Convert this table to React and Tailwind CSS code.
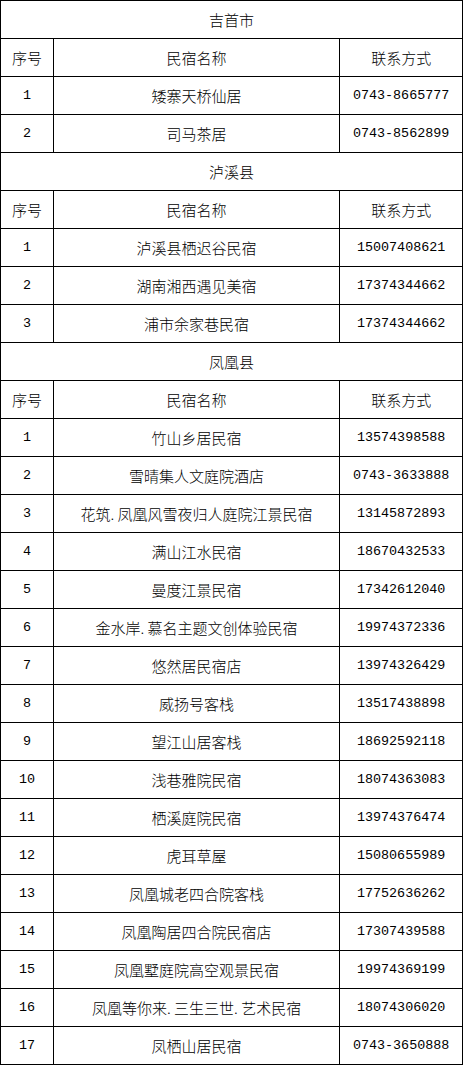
import React from 'react';

const sections = [
  {
    name: '吉首市',
    rows: [
      ['1', '矮寨天桥仙居', '0743-8665777'],
      ['2', '司马茶居', '0743-8562899'],
    ],
  },
  {
    name: '泸溪县',
    rows: [
      ['1', '泸溪县栖迟谷民宿', '15007408621'],
      ['2', '湖南湘西遇见美宿', '17374344662'],
      ['3', '浦市余家巷民宿', '17374344662'],
    ],
  },
  {
    name: '凤凰县',
    rows: [
      ['1', '竹山乡居民宿', '13574398588'],
      ['2', '雪晴集人文庭院酒店', '0743-3633888'],
      ['3', '花筑. 凤凰风雪夜归人庭院江景民宿', '13145872893'],
      ['4', '满山江水民宿', '18670432533'],
      ['5', '曼度江景民宿', '17342612040'],
      ['6', '金水岸. 慕名主题文创体验民宿', '19974372336'],
      ['7', '悠然居民宿店', '13974326429'],
      ['8', '威扬号客栈', '13517438898'],
      ['9', '望江山居客栈', '18692592118'],
      ['10', '浅巷雅院民宿', '18074363083'],
      ['11', '栖溪庭院民宿', '13974376474'],
      ['12', '虎耳草屋', '15080655989'],
      ['13', '凤凰城老四合院客栈', '17752636262'],
      ['14', '凤凰陶居四合院民宿店', '17307439588'],
      ['15', '凤凰墅庭院高空观景民宿', '19974369199'],
      ['16', '凤凰等你来. 三生三世. 艺术民宿', '18074306020'],
      ['17', '凤栖山居民宿', '0743-3650888'],
    ],
  },
];

const cjk = "font-['Noto_Sans_CJK_SC',sans-serif] text-[15px] font-light";
const mono = "font-['Liberation_Mono',monospace] text-[13.4px]";

const Cell = ({ w, last, children, font }) => (
  <div
    className={`${w} h-full flex items-center justify-center pt-[2px] ${last ? '' : 'border-r border-black'} ${font}`}
  >
    {children}
  </div>
);

const Row = ({ a, b, c, header }) => (
  <div className="flex h-[38px] border-b border-black text-black">
    <Cell w="w-[53px]" font={header ? cjk : mono}>{a}</Cell>
    <Cell w="w-[287px]" font={cjk}>{b}</Cell>
    <Cell w="w-[122px]" last font={header ? cjk : mono}>{c}</Cell>
  </div>
);

export default function App() {
  return (
    <div className="bg-white w-[464px] min-h-[1065px]">
      <div className="w-[463px] border-l border-t border-r border-black box-border">
        {sections.map((s) => (
          <div key={s.name}>
            <div className={`h-[38px] border-b border-black flex items-center justify-center pt-[2px] text-black ${cjk}`}>
              {s.name}
            </div>
            <Row a="序号" b="民宿名称" c="联系方式" header />
            {s.rows.map((r) => (
              <Row key={s.name + r[0]} a={r[0]} b={r[1]} c={r[2]} />
            ))}
          </div>
        ))}
      </div>
    </div>
  );
}
